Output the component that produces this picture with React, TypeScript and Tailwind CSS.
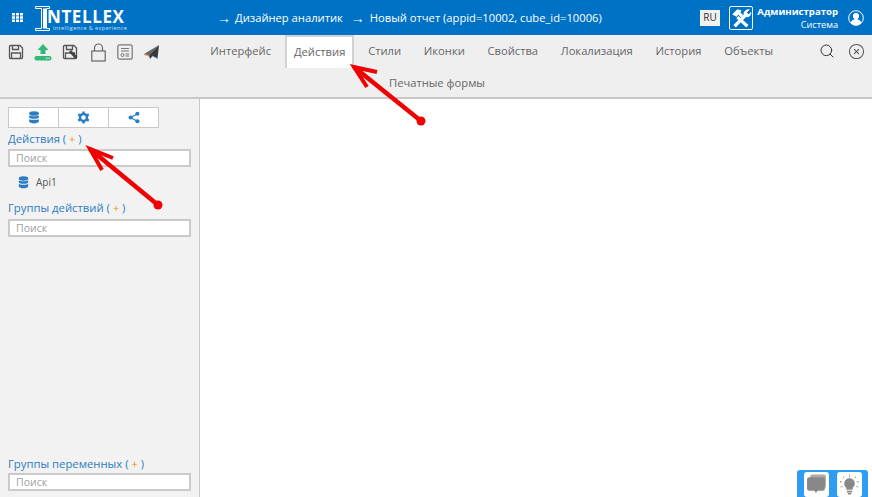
import { Search, CircleX } from 'lucide-react'

const TABS = ['Интерфейс', 'Действия', 'Стили', 'Иконки', 'Свойства', 'Локализация', 'История', 'Объекты']

function DbIcon({ className }: { className: string }) {
  return (
    <svg viewBox="0 0 14 16" className={className} fill="currentColor">
      <ellipse cx="7" cy="3" rx="6" ry="2.8" />
      <path d="M1 5.2c1.2 1.6 10.800 1.600 12 0V8c-.8 2.200-11.200 2.200-12 0z" />
      <path d="M1 9.700c1.200 1.600 10.800 1.600 12 0V13c-.8 3-11.200 3-12 0z" />
    </svg>
  )
}

function GearIcon({ className }: { className: string }) {
  return (
    <svg viewBox="0 0 16 16" className={className}>
      <circle cx="8" cy="8" r="4.300" fill="none" stroke="currentColor" strokeWidth="3" />
      <path d="M8 .5v3M8 12.500v3M1.500 4.200l2.600 1.500M11.900 10.300l2.600 1.500M1.500 11.800l2.600-1.500M11.900 5.700l2.600-1.500" stroke="currentColor" strokeWidth="3" />
    </svg>
  )
}

function ShareIcon({ className }: { className: string }) {
  return (
    <svg viewBox="0 0 16 16" className={className} fill="currentColor">
      <circle cx="12.500" cy="3" r="2.800" />
      <circle cx="3.500" cy="8" r="2.800" />
      <circle cx="12.500" cy="13" r="2.800" />
      <path d="M12.500 3 3.500 8l9 5" fill="none" stroke="currentColor" strokeWidth="1.500" />
    </svg>
  )
}

function Floppy({ pen }: { pen?: boolean }) {
  return (
    <svg viewBox="0 0 16 16" className="h-[16px] w-[16px]" fill="none" stroke="#555" strokeWidth="1.300">
      <path d="M1.500 2.500a1 1 0 0 1 1-1h9.500l2.500 2.500v9.500a1 1 0 0 1-1 1h-11a1 1 0 0 1-1-1z" />
      <path d="M4.500 1.500v4h6v-4M3.500 14.500v-5.500h9v5.500" />
      {pen && <path d="M8 7l6.500 7" stroke="#444" strokeWidth="2.800" />}
    </svg>
  )
}

function SearchBox() {
  return (
    <div className="h-[18px] w-[183px] border-2 border-[#cacaca] bg-white pl-[6px] text-[10.500px] leading-[14px] text-[#a0a0a0]">
      Поиск
    </div>
  )
}

function SectionTitle({ label }: { label: string }) {
  return (
    <div className="text-[11.300px] leading-[17px] text-[#2b7cc0]">
      {label} ( <span className="text-[11px] text-[#f09000]">+</span> )
    </div>
  )
}

function Arrow({ tip, a, b, tail }: { tip: [number, number]; a: string; b: string; tail: [number, number] }) {
  return (
    <>
      <polyline points={`${a} ${tip[0]},${tip[1]} ${b}`} fill="none" stroke="#f00000" strokeWidth="4" />
      <line x1={tip[0]} y1={tip[1]} x2={tail[0]} y2={tail[1]} stroke="#f00000" strokeWidth="4.500" />
      <circle cx={tail[0]} cy={tail[1]} r="4.500" fill="#f00000" />
    </>
  )
}

export default function App() {
  return (
    <div className="relative flex h-[497px] w-[872px] flex-col overflow-hidden bg-white font-['Open_Sans',sans-serif]">
      {/* верхняя панель */}
      <header className="flex h-[35px] items-center bg-[#0072c6] text-white">
        <svg viewBox="0 0 11 9" className="ml-[12px] h-[9px] w-[11px]" fill="white">
          <path d="M0 0h3v2.500H0zM4 0h3v2.500H4zM8 0h3v2.500H8zM0 3.250h3v2.500H0zM4 3.250h3v2.500H4zM8 3.250h3v2.500H8zM0 6.500h3V9H0zM4 6.500h3V9H4zM8 6.500h3V9H8z" />
        </svg>
        <div className="relative ml-[12px] h-[33px] w-[95px]">
          <svg viewBox="0 0 15 25" className="absolute left-0 top-[5px] h-[25px] w-[15px]" fill="none" stroke="white" strokeWidth="1">
            <path d="M.5.500h14v2h-3v20h3v2H.5v-2h6v-20h-6z" />
            <path d="M9.500 2.500v20" strokeWidth="3" />
          </svg>
          <span className="absolute left-[12px] top-[9px] text-[17px] font-bold leading-[14px] tracking-[0.6px]">NTELLEX</span>
          <span className="absolute left-[18px] top-[24px] whitespace-nowrap text-[5.500px] leading-[7px] tracking-[0.400px] text-[#cfe4f5]">intelligence &amp; experience</span>
        </div>
        <div className="ml-[87px] flex items-center text-[11.200px] leading-[16px]">
          <span className="w-[18px] text-[14px]">→</span>
          <span>Дизайнер аналитик</span>
          <span className="ml-[8px] w-[19px] text-[14px]">→</span>
          <span>Новый отчет (appid=10002, cube_id=10006)</span>
        </div>
        <div className="ml-auto flex h-full items-center">
          <div className="flex h-[16px] w-[20px] items-center justify-center bg-[#f0f0f0] text-[10px] text-[#333]">RU</div>
          <div className="ml-[9px] flex h-[24px] w-[24px] items-center justify-center rounded-[2px] border border-white">
            <svg viewBox="0 0 24 24" className="h-[22px] w-[22px]" fill="none" stroke="white">
              <path d="M5 21 19 7" strokeWidth="3.500" />
              <path d="M3 8l5-5 4 1-1 2 3 3-2 2-3-3-2 2z" fill="white" strokeWidth="1" />
              <path d="M8 11l11 10" strokeWidth="3.500" />
              <path d="M21 3l-3 3 1 2 2 .5 1.500-2.500c.5 3-2 5.500-5 4.500l-2-2c-1-3 2-6 5.500-5.500z" fill="white" strokeWidth="1" />
            </svg>
          </div>
          <div className="ml-[4px] flex w-[81px] flex-col items-end leading-[13px]">
            <span className="text-[9.600px] font-bold">Администратор</span>
            <span className="text-[9.200px]">Система</span>
          </div>
          <svg viewBox="0 0 16 16" className="ml-[10px] mr-[8px] h-[16px] w-[16px]">
            <circle cx="8" cy="8" r="7.300" fill="#0072c6" stroke="white" />
            <circle cx="8" cy="6" r="3.100" fill="white" />
            <path d="M2.800 13c.6-3 2.800-4 5.200-4s4.600 1 5.200 4a7 7 0 0 1-10.400 0z" fill="white" />
          </svg>
        </div>
      </header>

      {/* панель инструментов и вкладки */}
      <div className="flex h-[64px] border-b-2 border-[#c8c8c8] bg-[#efefef]">
        <div className="flex h-[34px] w-[200px] items-center pl-[8px]">
          <Floppy />
          <svg viewBox="0 0 18 18" className="ml-[10px] h-[18px] w-[18px]">
            <path d="M9 1l5.500 6H11.500v4h-5V7H3.500z" fill="#35b779" />
            <rect x="0.500" y="13" width="17" height="4.500" rx="2" fill="#35b779" />
            <path d="M12 15.200h1.500M14.500 15.200h1.500" stroke="white" strokeWidth="1" />
          </svg>
          <div className="ml-[10px]"><Floppy pen /></div>
          <svg viewBox="0 0 15 19" className="ml-[13px] h-[19px] w-[15px]" fill="none" stroke="#666" strokeWidth="1.200">
            <rect x="0.800" y="8" width="13.400" height="10" />
            <path d="M3.500 8V5a4 4 0 0 1 8 0v3" />
          </svg>
          <svg viewBox="0 0 16 16" className="ml-[11px] h-[16px] w-[16px]" fill="none" stroke="#777" strokeWidth="1.200">
            <rect x="0.800" y="0.800" width="14.400" height="14.400" rx="2" />
            <path d="M4 4.500h8M4 7h8M8.500 10h3.500M8.500 12h3.500" />
            <circle cx="5.500" cy="11" r="1.500" strokeWidth="1" />
          </svg>
          <svg viewBox="0 0 16 14" className="ml-[11px] h-[14px] w-[16px]">
            <path d="M15 0 0 9l5 1.500z" fill="#666" />
            <path d="M15 0 5 10.500 6 14l2.500-3 5 2.500z" fill="#3a3a3a" />
            <path d="M0 9.500l5 1.500" stroke="#e8964a" strokeWidth="1" />
            <path d="M8.500 11l5 2.500" stroke="#5a9bd4" strokeWidth="1" />
          </svg>
        </div>
        <div className="flex-1">
          <nav className="-ml-px flex h-[33px] items-stretch text-[11.200px] text-[#666]">
            {TABS.map((tab, i) =>
              i === 1 ? (
                <span key={tab} className="mx-[2.500px] flex items-center border-x-2 border-t-2 border-[#d2d2d2] bg-white px-[7px]">{tab}</span>
              ) : (
                <span key={tab} className="flex items-center px-[11.350px]">{tab}</span>
              ),
            )}
            <Search className="ml-auto mt-[8px] h-[16px] w-[16px] text-[#333]" strokeWidth={1.500} />
            <CircleX className="ml-[13px] mr-[7px] mt-[8px] h-[17px] w-[17px] text-[#555]" strokeWidth={1.500} />
          </nav>
          <div className="pl-[189px] pt-[7px] text-[11.200px] leading-[16px] text-[#666]">Печатные формы</div>
        </div>
      </div>

      <div className="flex flex-1">
        {/* боковая панель */}
        <aside className="flex w-[200px] flex-col border-r border-[#c8c8c8] bg-[#f2f2f2] pl-[8px]">
          <div className="mt-[8px] flex h-[21px] w-[151px] border border-[#c8c8c8] bg-white text-[#2b7cc0]">
            <div className="flex flex-1 items-center justify-center"><DbIcon className="h-[13px] w-[12px]" /></div>
            <div className="flex flex-1 items-center justify-center border-x border-[#c8c8c8]"><GearIcon className="h-[13px] w-[13px]" /></div>
            <div className="flex flex-1 items-center justify-center"><ShareIcon className="h-[13px] w-[12px]" /></div>
          </div>
          <div className="mt-[2px]"><SectionTitle label="Действия" /></div>
          <div className="mt-[2px]"><SearchBox /></div>
          <div className="mt-[7px] flex h-[16px] items-center pl-[10px] text-[10px] text-[#555]">
            <DbIcon className="h-[13px] w-[11px] text-[#2b7cc0]" />
            <span className="ml-[7px]">Api1</span>
          </div>
          <div className="mt-[9px]"><SectionTitle label="Группы действий" /></div>
          <div className="mt-[3px]"><SearchBox /></div>
          <div className="mb-[1px] mt-auto"><SectionTitle label="Группы переменных" /></div>
          <div className="mb-[6px]"><SearchBox /></div>
        </aside>
        <main className="flex-1 bg-white" />
      </div>

      {/* кнопки в правом нижнем углу */}
      <div className="absolute bottom-0 right-[4px] flex h-[27px] w-[71px] items-end justify-center gap-[8px] rounded-tl-[3px] rounded-tr-[3px] bg-[#2f9cf4]">
        <div className="flex h-[25px] w-[25px] items-center justify-center rounded-[3px] bg-white">
          <svg viewBox="0 0 20 20" className="h-[21px] w-[21px]" fill="#888">
            <rect x="4" y="0.500" width="15" height="13" rx="2" fill="#aaa" />
            <path d="M3 3h13a2 2 0 0 1 2 2v9a2 2 0 0 1-2 2h-5l-1.500 2-1.500-2H3a2 2 0 0 1-2-2V5a2 2 0 0 1 2-2z" />
          </svg>
        </div>
        <div className="flex h-[25px] w-[25px] items-center justify-center rounded-[3px] bg-white">
          <svg viewBox="0 0 20 20" className="h-[21px] w-[21px]" fill="#888">
            <path d="M10 4a5 5 0 0 1 3 9v2H7v-2a5 5 0 0 1 3-9zM7.500 16h5v1.500h-5zM8.500 18h3v1.500h-3z" />
            <path d="M10 .5v2M4 2.500l1 1.500M16 2.500l-1 1.500M1 7.500h2M17 7.500h2M1.500 12.500l2-.8M18.500 12.500l-2-.8" stroke="#888" strokeWidth="1" strokeDasharray="1 0.500" />
          </svg>
        </div>
      </div>

      {/* красные стрелки поверх интерфейса */}
      <svg className="pointer-events-none absolute inset-0 h-full w-full" viewBox="0 0 872 497">
        <Arrow tip={[354, 67]} a="377,72" b="367,87" tail={[421, 121]} />
        <Arrow tip={[90, 149]} a="113,158" b="102,170" tail={[158, 205]} />
      </svg>
    </div>
  )
}
